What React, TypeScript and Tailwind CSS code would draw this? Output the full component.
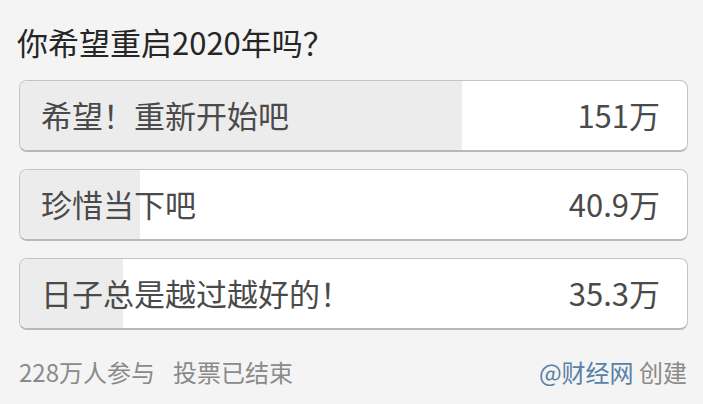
const OPTIONS = [
  { label: "希望！重新开始吧", count: "151万", value: 151 },
  { label: "珍惜当下吧", count: "40.9万", value: 40.9 },
  { label: "日子总是越过越好的！", count: "35.3万", value: 35.3 },
];

const TOTAL = 228;

export default function App() {
  return (
    <div
      className="w-[703px] h-[404px] overflow-hidden bg-[#f4f4f4] px-[19px] pt-[22px]"
      style={{ fontFamily: '"Noto Sans CJK SC", "Noto Sans", sans-serif' }}
    >
      <h1 className="text-[31px] leading-[40px] text-[#262626] -ml-[2px]">你希望重启2020年吗？</h1>

      <ul className="mt-[18px] flex flex-col gap-[17px]">
        {OPTIONS.map((opt) => (
          <li
            key={opt.label}
            className="relative h-[72px] w-[669px] overflow-hidden rounded-[8px] border border-[#c4c4c4] border-b-2 border-b-[#b8b8b8] bg-white"
          >
            <div
              className="absolute inset-y-0 left-0 bg-[#ececec]"
              style={{ width: `${(opt.value / TOTAL) * 100}%` }}
            />
            <div className="relative flex h-full items-center justify-between pl-[21px] pr-[27px] text-[31px] text-[#4a4a4a]">
              <span>{opt.label}</span>
              <span>{opt.count}</span>
            </div>
          </li>
        ))}
      </ul>

      <div className="mt-[26px] flex items-center justify-between text-[24px] leading-[32px] text-[#8a8a8a]">
        <div className="flex gap-[18px]">
          <span>228万人参与</span>
          <span>投票已结束</span>
        </div>
        <div className="-mr-[3px]">
          <span className="text-[#5a7fa8]">@财经网</span> 创建
        </div>
      </div>
    </div>
  );
}
